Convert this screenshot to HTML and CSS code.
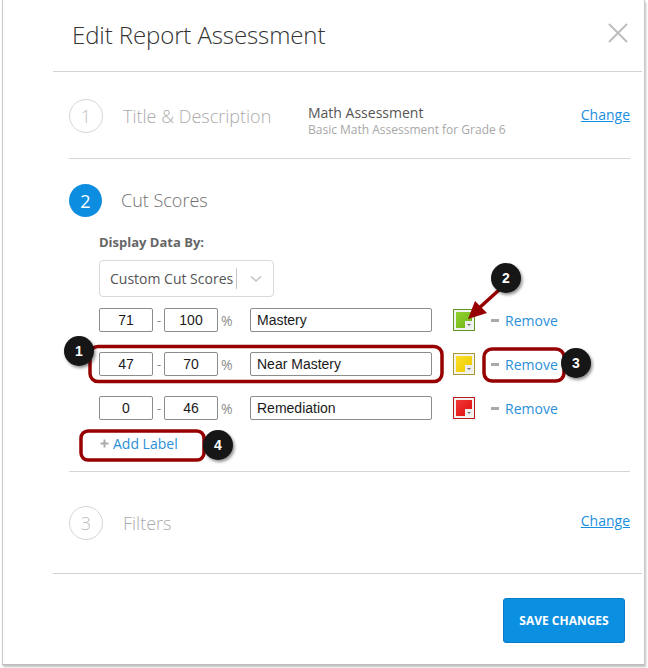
FILE: index.html
```html
<!DOCTYPE html>
<html>
<head>
<meta charset="utf-8">
<link rel="stylesheet" href="styles.css">
</head>
<body>
<div class="frame">
  <div class="modal">
    <header class="head">
      <h1 class="title">Edit Report Assessment</h1>
      <svg class="close" width="20" height="20" viewBox="0 0 20 20"><path d="M1 1L19 19M19 1L1 19" stroke="#bdbdbd" stroke-width="2" fill="none"/></svg>
    </header>
    <div class="steps">
      <section class="step s1">
        <div class="num">1</div>
        <div class="stitle">Title &amp; Description</div>
        <div class="summary">
          <div class="sum-t">Math Assessment</div>
          <div class="sum-d">Basic Math Assessment for Grade 6</div>
        </div>
        <a class="change">Change</a>
      </section>
      <section class="step s2">
        <div class="step-head">
          <div class="num active">2</div>
          <div class="stitle dark">Cut Scores</div>
        </div>
        <div class="cut-body">
          <div class="label">Display Data By:</div>
          <div class="select">
            <span class="sel-text">Custom Cut Scores</span>
            <span class="sel-sep"></span>
            <svg class="chev" width="12" height="8" viewBox="0 0 12 8"><path d="M1 1.5L6 6L11 1.5" stroke="#c4c4c4" stroke-width="1.6" fill="none"/></svg>
          </div>
          <div class="rows">
            <div class="row">
              <div class="nin">71</div><span class="dash">-</span><div class="nin">100</div><span class="pct">%</span>
              <div class="tin">Mastery</div>
              <div class="swatch green"><div class="fill"></div><span class="corner"></span></div>
              <span class="minus"></span><a class="remove">Remove</a>
            </div>
            <div class="row">
              <div class="nin">47</div><span class="dash">-</span><div class="nin">70</div><span class="pct">%</span>
              <div class="tin">Near Mastery</div>
              <div class="swatch yellow"><div class="fill"></div><span class="corner"></span></div>
              <span class="minus"></span><a class="remove">Remove</a>
            </div>
            <div class="row">
              <div class="nin">0</div><span class="dash">-</span><div class="nin">46</div><span class="pct">%</span>
              <div class="tin">Remediation</div>
              <div class="swatch red"><div class="fill"></div><span class="corner"></span></div>
              <span class="minus"></span><a class="remove">Remove</a>
            </div>
          </div>
          <a class="add"><svg class="plus" width="9" height="9" viewBox="0 0 9 9"><path d="M4.5 0.5V8.5M0.5 4.5H8.5" stroke="#ababab" stroke-width="2"/></svg>Add Label</a>
        </div>
      </section>
      <section class="step s3">
        <div class="num">3</div>
        <div class="stitle">Filters</div>
        <a class="change">Change</a>
      </section>
    </div>
    <footer class="foot">
      <button class="save">SAVE CHANGES</button>
    </footer>
  </div>
</div>
<svg class="annot" width="648" height="668" viewBox="0 0 648 668">
  <defs>
    <filter id="sh" x="-50%" y="-50%" width="200%" height="200%">
      <feDropShadow dx="1.5" dy="2" stdDeviation="1.5" flood-color="#000" flood-opacity="0.45"/>
    </filter>
  </defs>
  <g fill="none" stroke="#960000" stroke-width="3.5">
    <rect x="90" y="346.5" width="352" height="35" rx="8"/>
    <rect x="484" y="349" width="80" height="32" rx="8"/>
    <rect x="81" y="431" width="123" height="29" rx="7"/>
  </g>
  <line x1="499" y1="290" x2="478" y2="309" stroke="#960000" stroke-width="3.5"/>
  <polygon points="468,319 475,301 487,313" fill="#960000"/>
  <g filter="url(#sh)" fill="#141414">
    <circle cx="79" cy="351" r="15"/>
    <circle cx="506" cy="278" r="15"/>
    <circle cx="576" cy="363" r="15"/>
    <circle cx="218" cy="445" r="15"/>
  </g>
  <g fill="#fff" font-family="Liberation Sans, Arial, sans-serif" font-weight="bold" font-size="14" text-anchor="middle">
    <text x="79" y="356">1</text>
    <text x="506" y="283">2</text>
    <text x="576" y="368">3</text>
    <text x="218" y="450">4</text>
  </g>
</svg>
</body>
</html>
```

FILE: styles.css
```css
* { box-sizing: border-box; }
html, body { margin: 0; padding: 0; background: #fff; }
body { font-family: "Open Sans", "Liberation Sans", sans-serif; width: 648px; height: 668px; overflow: hidden; position: relative; }

.frame {
  margin-left: 2px;
  width: 643px;
  height: 665px;
  border-left: 1px solid #c9c9c9;
  border-right: 1px solid #c9c9c9;
  border-bottom: 1px solid #bdbdbd;
  box-shadow: 1px 2px 2px rgba(0,0,0,0.25);
  background: #fff;
}
.modal { padding-left: 50px; padding-right: 2px; }

.head {
  height: 72px;
  border-bottom: 1px solid #d3d3d3;
  display: flex;
  align-items: center;
  padding: 0 14px 2px 19px;
}
.title { margin: 0; font-weight: 300; font-size: 24px; color: #333; flex: 1; letter-spacing: -0.1px; }
.close { display: block; margin-top: -4px; }

.steps { padding: 0 12px 0 16px; }
.step { border-bottom: 1px solid #d5d5d5; }
.step:last-child { border-bottom: none; }

.num {
  width: 34px; height: 34px; border-radius: 50%;
  border: 1px solid #d6d6d6;
  display: flex; align-items: center; justify-content: center;
  font-size: 18px; font-weight: 300; color: #c0c0c0;
  flex: none;
}
.num.active { width: 33px; height: 33px; border: none; background: #0d8de0; color: #fff; font-weight: 400; }
.stitle { margin-left: 20px; font-size: 18px; font-weight: 300; color: #ababab; }
.stitle.dark { margin-left: 19px; color: #707070; margin-top: -2px; }

.s1 { height: 87px; display: flex; align-items: center; padding-top: 2px; }
.s1 .stitle { width: 185px; }
.summary { flex: 1; margin-top: 8px; }
.sum-t { font-size: 14px; color: #555; line-height: 18px; }
.sum-d { font-size: 12px; color: #a8a8a8; line-height: 15px; }
.change { font-size: 14px; color: #1a8ee0; text-decoration: underline; margin-left: auto; align-self: center; }
.s1 .change { margin-top: -4px; }
.s3 .change { margin-top: -4px; }

.s2 { padding-top: 25px; padding-bottom: 18px; }
.step-head { display: flex; align-items: center; }
.cut-body { margin-left: 30px; }
.label { margin-top: 16px; font-size: 13px; font-weight: 700; color: #666; line-height: 18px; }
.select {
  margin-top: 9px;
  width: 175px; height: 37px;
  border: 1px solid #d9d9d9; border-radius: 4px;
  display: flex; align-items: center;
  padding-left: 10px;
}
.sel-text { font-size: 14px; color: #555; white-space: nowrap; }
.sel-sep { width: 1px; height: 21px; background: #c6c6c6; margin-left: 3px; }
.chev { margin-left: 13px; }

.rows { margin-top: 11px; display: flex; flex-direction: column; gap: 20px; }
.row { display: flex; align-items: center; height: 24px; }
.nin {
  width: 54px; height: 24px; border: 1px solid #8c8c8c; border-radius: 2px;
  font-family: "Liberation Sans", Arial, sans-serif; font-size: 14px; color: #1a1a1a;
  display: flex; align-items: center; justify-content: center;
}
.dash { width: 11px; text-align: center; color: #8a8a8a; font-size: 13px; padding-left: 1px; }
.pct { margin-left: 3px; width: 13px; color: #8e8e8e; font-size: 14px; }
.tin {
  margin-left: 16px; width: 182px; height: 24px;
  border: 1px solid #8c8c8c; border-radius: 2px;
  font-family: "Liberation Sans", Arial, sans-serif; font-size: 14px; color: #1a1a1a;
  display: flex; align-items: center; padding-left: 6px;
}
.swatch {
  margin-left: 21px; width: 22px; height: 22px;
  border: 1px solid #666; padding: 2px; background: #f2f2f2;
  position: relative;
}
.swatch .fill { width: 100%; height: 100%; }
.swatch .corner {
  position: absolute; right: 2px; bottom: 2px; width: 7px; height: 7px;
  background: #eee;
}
.swatch .corner::after {
  content: ""; position: absolute; left: 2px; top: 3px;
  border-left: 2px solid transparent; border-right: 2px solid transparent; border-top: 2px solid #777;
}
.green { border-color: #5f9a1e; }
.green .fill { background: linear-gradient(135deg, #93d12e, #6fb216); }
.yellow { border-color: #aa9b2c; }
.yellow .fill { background: linear-gradient(135deg, #fbe02a, #efc900); }
.red { border-color: #b21a1a; }
.red .fill { background: linear-gradient(135deg, #f23a3a, #dd0a0a); }

.minus { margin-left: 16px; width: 8px; height: 3px; background: #a9a9a9; }
.remove { margin-left: 6px; font-size: 14px; color: #2a8fd8; }

.add { display: flex; align-items: center; margin-top: 13px; height: 20px; font-size: 14px; color: #2a8fd8; }
.plus { display: block; margin-left: 1px; margin-right: 4px; }

.s3 { height: 101px; display: flex; align-items: center; }

.foot {
  border-top: 1px solid #d0d0d0;
  display: flex; justify-content: flex-end;
  padding: 24px 17px 0 0;
}
.save {
  width: 122px; height: 45px;
  background: #0b8fe1; border: 1px solid #0a7cc6; border-radius: 3px;
  color: #fff; font-family: "Open Sans", sans-serif; font-weight: 700; font-size: 12px;
}

.annot { position: absolute; left: 0; top: 0; pointer-events: none; }
```
